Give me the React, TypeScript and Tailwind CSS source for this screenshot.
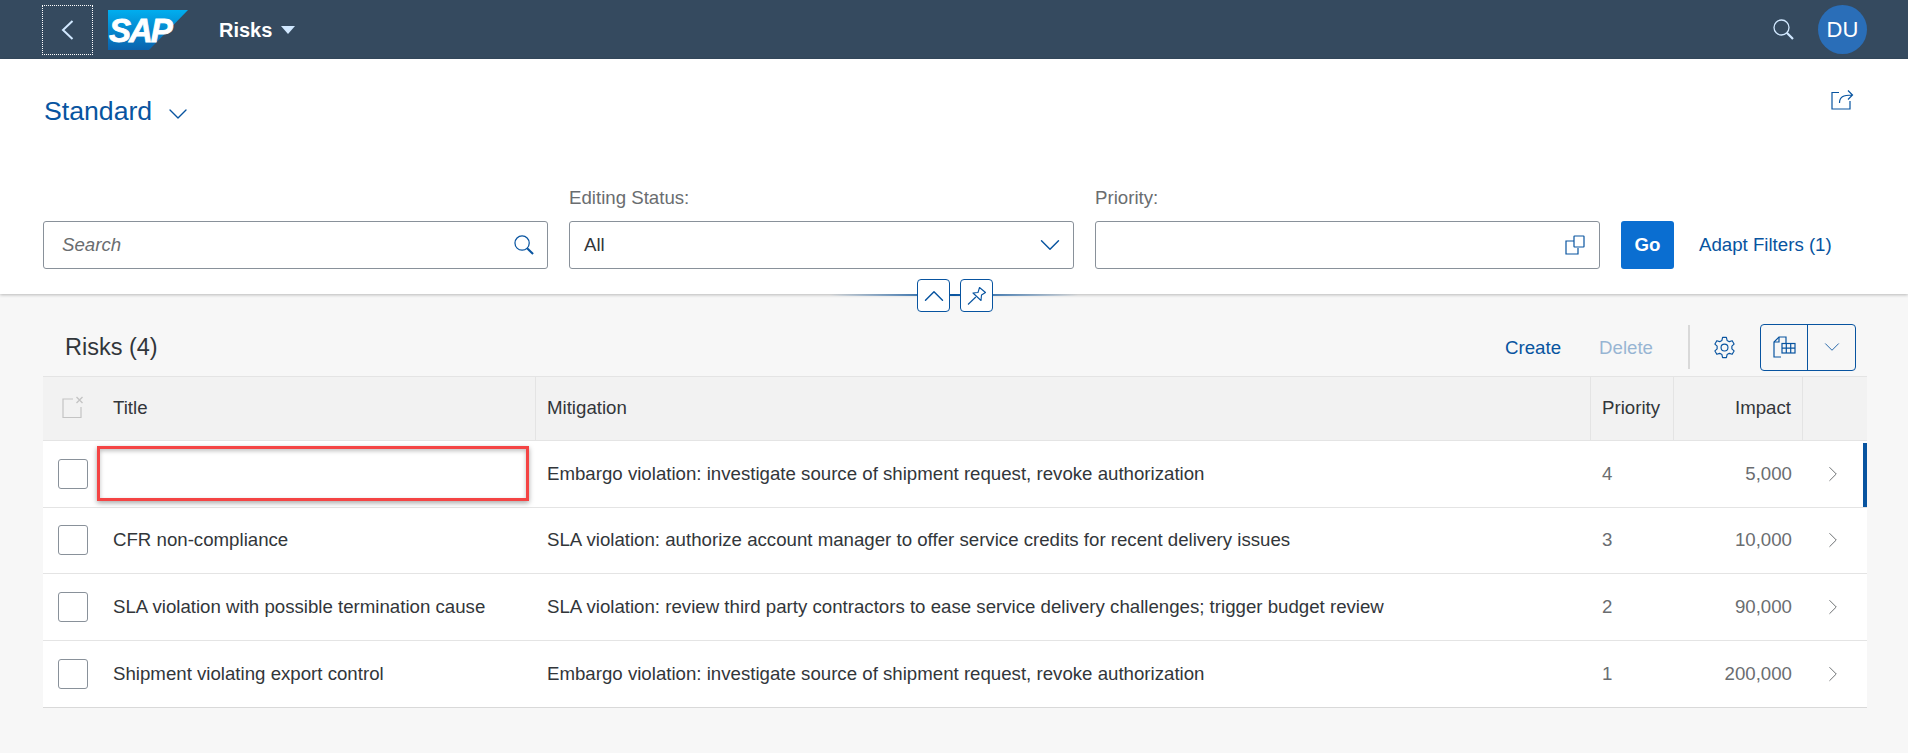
import React from 'react';
import { ChevronDown, ChevronRight, ChevronUp } from 'lucide-react';

const rows = [
  { title: '', mitigation: 'Embargo violation: investigate source of shipment request, revoke authorization', priority: 4, impact: '5,000', active: true },
  { title: 'CFR non-compliance', mitigation: 'SLA violation: authorize account manager to offer service credits for recent delivery issues', priority: 3, impact: '10,000' },
  { title: 'SLA violation with possible termination cause', mitigation: 'SLA violation: review third party contractors to ease service delivery challenges; trigger budget review', priority: 2, impact: '90,000' },
  { title: 'Shipment violating export control', mitigation: 'Embargo violation: investigate source of shipment request, revoke authorization', priority: 1, impact: '200,000' },
];

const SearchIcon = ({ className }: { className: string }) => (
  <svg viewBox="0 0 21 21" className={className} fill="none" stroke="currentColor">
    <circle cx="8.5" cy="8.5" r="7.5" strokeWidth="1.3" />
    <path d="M13.8 13.8 L20 20" strokeWidth="2.2" />
  </svg>
);

const BackIcon = () => (
  <svg viewBox="0 0 13 20" className="w-[13px] h-5 text-[#d1e8ff]" fill="none" stroke="currentColor" strokeWidth="2">
    <path d="M11.5 1 L2 10 L11.5 19" />
  </svg>
);

const SapLogo = () => (
  <svg viewBox="0 0 80 40" className="w-20 h-10 ml-[15px]">
    <defs>
      <linearGradient id="sapBlue" x1="0" y1="0" x2="0" y2="1">
        <stop offset="0" stopColor="#00aeef" />
        <stop offset="1" stopColor="#0a62ad" />
      </linearGradient>
    </defs>
    <polygon points="0,0 80,0 41,40 0,40" fill="url(#sapBlue)" />
    <text x="1" y="32" fontFamily="Liberation Sans" fontWeight="700" fontStyle="italic" fontSize="33" letterSpacing="-2" stroke="#ffffff" strokeWidth="0.8" fill="#ffffff">SAP</text>
  </svg>
);

const ShareIcon = () => (
  <svg viewBox="0 0 23 21" className="w-[23px] h-[21px] text-[#0854a0]" fill="none" stroke="currentColor" strokeWidth="1.2">
    <path d="M8 3.5 H1 V20 H19 V12" />
    <path d="M8.5 14 C8.5 8 12 6 21 6 M17 1.5 L21.5 6 L17 10.5" />
  </svg>
);

const ValueHelpIcon = () => (
  <svg viewBox="0 0 20 20" className="w-5 h-5 text-[#0854a0]" fill="none" stroke="currentColor" strokeWidth="1.2">
    <path d="M9 6 H1 V19 H13 V13" />
    <rect x="9" y="1" width="10" height="11" rx="0.5" />
  </svg>
);

const PinIcon = () => (
  <svg viewBox="0 0 20 20" className="w-[20px] h-[20px] text-[#0854a0]" fill="none" stroke="currentColor" strokeWidth="1.1">
    <path d="M12.5 1.5 L18.5 6.5 L14.5 9 L14 14.5 L6 7 L11 6.5 Z" strokeLinejoin="round" />
    <path d="M8.8 11 L1 18.5" />
  </svg>
);

const GearIcon = () => (
  <svg viewBox="0 0 24 24" className="w-[23px] h-[23px] text-[#0854a0]" fill="none" stroke="currentColor" strokeWidth="1.2" strokeLinejoin="round">
    <circle cx="12" cy="12" r="3.6" />
    <path d="M10 1.5 H14 L14.7 4.6 L17 5.9 L20 4.9 L22 8.4 L19.7 10.5 V13.5 L22 15.6 L20 19.1 L17 18.1 L14.7 19.4 L14 22.5 H10 L9.3 19.4 L7 18.1 L4 19.1 L2 15.6 L4.3 13.5 V10.5 L2 8.4 L4 4.9 L7 5.9 L9.3 4.6 Z" />
  </svg>
);

const ExportIcon = () => (
  <svg viewBox="0 0 23 23" className="w-[23px] h-[23px] text-[#0854a0]" fill="none" stroke="currentColor" strokeWidth="1.2">
    <path d="M13 7 V1 H6 L1 6 V21 H8" />
    <path d="M6 1 V6 H1" />
    <rect x="9" y="7.5" width="13" height="9.5" />
    <path d="M9 12.2 H22 M13.3 7.5 V17 M17.7 7.5 V17" />
  </svg>
);

const SelectAllIcon = () => (
  <svg viewBox="0 0 22 23" className="w-[22px] h-[23px] text-[#c4c4c4]" fill="none" stroke="currentColor" strokeWidth="1.2">
    <path d="M11 3 H1 V21.5 H19 V11" />
    <path d="M14.5 1 L20.5 7 M20.5 1 L14.5 7" strokeWidth="1.4" />
  </svg>
);

const Checkbox = () => (
  <div className="w-[30px] h-[30px] shrink-0 bg-white border border-[#89919a] rounded-[3px]" />
);

const HeaderCell = ({ children, className = '' }: { children?: React.ReactNode; className?: string }) => (
  <div className={`h-full flex items-center border-r border-[#e4e4e4] ${className}`}>{children}</div>
);

const FilterLabel = ({ children }: { children: React.ReactNode }) => (
  <div className="h-[37px] text-[#6a6d70]">{children}</div>
);

const App = () => {
  return (
    <div className="w-[1908px] h-[753px] overflow-hidden bg-[#f7f7f7] font-['Liberation_Sans',sans-serif] text-[18.67px] text-[#32363a]">
      <header className="h-[59px] bg-[#354a5f] flex items-center pl-[42px] pr-[41px]">
        <button className="w-[51px] h-[50px] flex items-center justify-center border border-dotted border-white">
          <BackIcon />
        </button>
        <SapLogo />
        <div className="ml-[31px] text-[20px] font-bold text-white">Risks</div>
        <div className="ml-[9px] w-0 h-0 border-x-[7px] border-x-transparent border-t-[8px] border-t-[#d1e8ff]" />
        <div className="flex-1" />
        <SearchIcon className="w-[21px] h-[21px] text-[#d1e8ff]" />
        <div className="ml-[24px] w-[49px] h-[49px] rounded-full bg-[#2a6eb8] text-white text-[22px] flex items-center justify-center">DU</div>
      </header>

      <section className="relative h-[235px] bg-white shadow-[0_1px_3px_rgba(0,0,0,0.25)] pl-[43px] pr-[54px] flex flex-col">
        <div className="flex justify-between items-start pt-[30px]">
          <div className="h-[44px] flex items-center text-[#0854a0] pl-px">
            <span className="text-[26.67px]">Standard</span>
            <ChevronDown size={32} strokeWidth={1} className="ml-[10px] mt-[5px] shrink-0" />
          </div>
          <ShareIcon />
        </div>
        <div className="flex-1" />
        <div className="flex items-end gap-[21px] pb-[25px]">
          <div className="w-[505px] h-[48px] border border-[#89919a] rounded-[3px] flex items-center pl-[18px] pr-[13px]">
            <span className="italic text-[#6a6d70]">Search</span>
            <div className="flex-1" />
            <SearchIcon className="w-[20px] h-[20px] text-[#0854a0]" />
          </div>
          <div>
            <FilterLabel>Editing Status:</FilterLabel>
            <div className="w-[505px] h-[48px] border border-[#89919a] rounded-[3px] flex items-center justify-between pl-[14px] pr-[6px]">
              <span>All</span>
              <ChevronDown size={34} strokeWidth={1} className="text-[#0854a0] shrink-0" />
            </div>
          </div>
          <div>
            <FilterLabel>Priority:</FilterLabel>
            <div className="w-[505px] h-[48px] border border-[#89919a] rounded-[3px] flex items-center justify-end pr-[14px]">
              <ValueHelpIcon />
            </div>
          </div>
          <button className="w-[53px] h-[48px] rounded-[3px] bg-[#0a6ed1] text-white font-bold">Go</button>
          <span className="h-[48px] flex items-center ml-[4px] text-[#0854a0]">Adapt Filters (1)</span>
        </div>

        {/* collapse and pin controls sit on the panel's bottom edge */}
        <div className="absolute left-[830px] top-[235px] w-[248px] h-[2px] bg-gradient-to-r from-transparent via-[#0854a0] to-transparent" />
        <button className="absolute left-[917px] top-[220px] w-[33px] h-[33px] bg-white border border-[#0854a0] rounded-[4px] flex items-center justify-center text-[#0854a0]">
          <ChevronUp size={34} strokeWidth={1} className="shrink-0" />
        </button>
        <button className="absolute left-[960px] top-[220px] w-[33px] h-[33px] bg-white border border-[#0854a0] rounded-[4px] flex items-center justify-center">
          <PinIcon />
        </button>
      </section>

      <main className="pl-[43px] pr-[41px]">
        <div className="h-[82px] pt-[24px] flex items-center pl-[22px]">
          <h2 className="text-[23.5px] text-[#32363a] mt-[2px]">Risks (4)</h2>
          <div className="flex-1" />
          <span className="text-[#0854a0] mt-[2px]">Create</span>
          <span className="ml-[38px] text-[#0854a0] opacity-40 mt-[2px]">Delete</span>
          <div className="ml-[35px] w-[2px] h-[44px] bg-[#d9d9d9]" />
          <div className="ml-[23px]"><GearIcon /></div>
          <div className="ml-[24px] mr-[11px] w-[96px] h-[47px] border border-[#0854a0] rounded-[4px] flex">
            <div className="w-[47px] border-r border-[#0854a0] flex items-center justify-center"><ExportIcon /></div>
            <div className="flex-1 flex items-center justify-center text-[#0854a0]"><ChevronDown size={26} strokeWidth={0.8} /></div>
          </div>
        </div>

        <div className="relative border-b border-[#d9d9d9]">
          <div className="h-[65px] bg-[#f2f2f2] border-y border-[#e4e4e4] grid grid-cols-[493px_1055px_83px_129px_64px] text-[#32363a]">
            <HeaderCell className="pb-[2px]">
              <div className="ml-[19px] w-[30px]"><SelectAllIcon /></div>
              <span className="ml-[21px]">Title</span>
            </HeaderCell>
            <HeaderCell className="pl-[11px] pb-[2px]">Mitigation</HeaderCell>
            <HeaderCell className="pl-[11px] pb-[2px]">Priority</HeaderCell>
            <HeaderCell className="justify-end pr-[11px] pb-[2px]">Impact</HeaderCell>
            <div />
          </div>
          {rows.map((row, i) => (
            <div
              key={i}
              className={`relative h-[66.5px] bg-white grid grid-cols-[493px_1055px_83px_129px_64px] items-center ${i < rows.length - 1 ? 'border-b border-[#e4e4e4]' : ''}`}
            >
              <div className="flex items-center pl-[15px]">
                <Checkbox />
                <span className="ml-[25px]">{row.title}</span>
              </div>
              <div className="pl-[11px]">{row.mitigation}</div>
              <div className="pl-[11px] text-[#6a6d70]">{row.priority}</div>
              <div className="text-right pr-[11px] text-[#6a6d70]">{row.impact}</div>
              <div className="pl-[17px] text-[#6a6d70]"><ChevronRight size={26} strokeWidth={0.9} /></div>
              {row.active && <div className="absolute right-0 top-[2px] bottom-0 w-1 bg-[#0854a0]" />}
            </div>
          ))}

          {/* red annotation box drawn over the first row's title */}
          <div className="absolute left-[54px] top-[70px] w-[432px] h-[55px] border-[3px] border-[#f44444] shadow-[0_2px_5px_rgba(0,0,0,0.35),inset_0_2px_4px_rgba(0,0,0,0.25)]" />
        </div>
      </main>
    </div>
  );
};

export default App;
